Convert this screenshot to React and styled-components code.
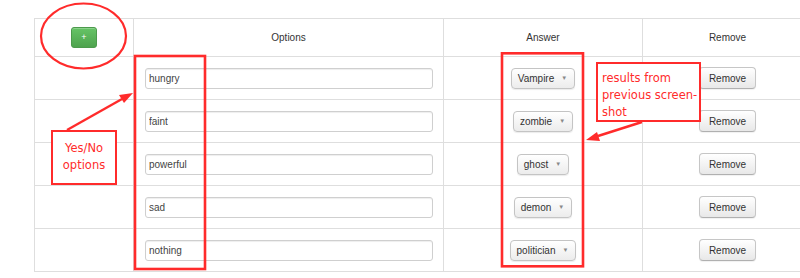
import React from "react";
import styled, { createGlobalStyle } from "styled-components";

const rows = [
  { option: "hungry", answer: "Vampire" },
  { option: "faint", answer: "zombie" },
  { option: "powerful", answer: "ghost" },
  { option: "sad", answer: "demon" },
  { option: "nothing", answer: "politician" },
];

const RED = "#ff2b2b";

function App() {
  return (
    <>
      <GlobalStyle />
      <Page>
        <Table>
          <colgroup>
            <col style={{ width: 99 }} />
            <col style={{ width: 310 }} />
            <col style={{ width: 199 }} />
            <col style={{ width: 170 }} />
          </colgroup>
          <thead>
            <tr>
              <HeadCell>
                <AddButton>+</AddButton>
              </HeadCell>
              <HeadCell>Options</HeadCell>
              <HeadCell>Answer</HeadCell>
              <HeadCell>Remove</HeadCell>
            </tr>
          </thead>
          <tbody>
            {rows.map((r) => (
              <tr key={r.option}>
                <Cell />
                <Cell $align="left">
                  <TextInput defaultValue={r.option} />
                </Cell>
                <Cell>
                  <SelectBox>
                    {r.answer}
                    <Caret>▼</Caret>
                  </SelectBox>
                </Cell>
                <Cell>
                  <RemoveButton>Remove</RemoveButton>
                </Cell>
              </tr>
            ))}
          </tbody>
        </Table>

        <Marks viewBox="0 0 800 278" width="800" height="278">
          <ellipse cx="83.5" cy="36" rx="42.5" ry="32.5" fill="none" stroke={RED} strokeWidth="2.2" />
          <rect x="135" y="56" width="70" height="213" fill="none" stroke={RED} strokeWidth="2.6" />
          <rect x="502" y="53.3" width="81" height="213" fill="none" stroke={RED} strokeWidth="2.6" />
          <line x1="67" y1="130" x2="122" y2="99" stroke={RED} strokeWidth="2.4" />
          <polygon points="133,93 124,103 119,95" fill={RED} />
          <line x1="642" y1="122" x2="598" y2="136" stroke={RED} strokeWidth="2.4" />
          <polygon points="586,140 600,141 597,132" fill={RED} />
        </Marks>

        <NoteBox $left={51} $top={130} $width={66} $height={55} $center>
          Yes/No
          <br />
          options
        </NoteBox>
        <NoteBox $left={596} $top={62} $width={105} $height={60}>
          results from
          <br />
          previous screen-
          <br />
          shot
        </NoteBox>
      </Page>
    </>
  );
}

const GlobalStyle = createGlobalStyle`
  html, body {
    margin: 0;
    padding: 0;
    background: #fff;
    overflow: hidden;
  }
  body {
    font-family: "Liberation Sans", Arial, sans-serif;
  }
`;

const Page = styled.div`
  position: relative;
  width: 800px;
  height: 278px;
  padding: 18px 0 0 34px;
  box-sizing: border-box;
  overflow: hidden;
`;

const Table = styled.table`
  width: 778px;
  border-collapse: collapse;
  table-layout: fixed;
  font-size: 10px;
  color: #333;
`;

const HeadCell = styled.th`
  height: 37px;
  padding: 0;
  border: 1px solid #dedede;
  font-weight: normal;
  text-align: center;
  vertical-align: middle;
`;

const Cell = styled.td`
  height: 42px;
  padding: ${(p) => (p.$align === "left" ? "0 0 0 11px" : "0")};
  border: 1px solid #dedede;
  text-align: ${(p) => p.$align || "center"};
  vertical-align: middle;
`;

const AddButton = styled.button`
  width: 26px;
  height: 21px;
  padding: 0;
  border: 1px solid #4c9a4c;
  border-radius: 3px;
  background: linear-gradient(#66c466, #4ea34e);
  color: #fff;
  font-family: "Liberation Sans", Arial, sans-serif;
  font-size: 9px;
  line-height: 19px;
  box-shadow: inset 0 1px 0 rgba(255, 255, 255, 0.25);
`;

const TextInput = styled.input`
  display: block;
  width: 288px;
  height: 21px;
  box-sizing: border-box;
  padding: 0 3px;
  border: 1px solid #cfcfcf;
  border-radius: 3px;
  box-shadow: inset 0 1px 1px rgba(0, 0, 0, 0.07);
  font-family: "Liberation Sans", Arial, sans-serif;
  font-size: 10px;
  color: #444;
  outline: none;
`;

const SelectBox = styled.div`
  display: inline-flex;
  align-items: center;
  gap: 7px;
  height: 21px;
  box-sizing: border-box;
  padding: 0 7px 0 6px;
  border: 1px solid #c4c4c4;
  border-radius: 4px;
  background: linear-gradient(#ffffff, #ececec);
  box-shadow: 0 1px 1px rgba(0, 0, 0, 0.08);
  font-size: 10px;
  color: #333;
`;

const Caret = styled.span`
  font-size: 6px;
  color: #888;
`;

const RemoveButton = styled.button`
  width: 57px;
  height: 22px;
  padding: 0;
  border: 1px solid #c6c6c6;
  border-bottom-color: #b0b0b0;
  border-radius: 4px;
  background: linear-gradient(#ffffff, #e8e8e8);
  box-shadow: 0 1px 1px rgba(0, 0, 0, 0.06);
  font-family: "Liberation Sans", Arial, sans-serif;
  font-size: 10px;
  color: #333;
`;

const Marks = styled.svg`
  position: absolute;
  left: 0;
  top: 0;
  pointer-events: none;
`;

const NoteBox = styled.div`
  position: absolute;
  left: ${(p) => p.$left}px;
  top: ${(p) => p.$top}px;
  width: ${(p) => p.$width}px;
  height: ${(p) => p.$height}px;
  box-sizing: border-box;
  border: 2.5px solid ${RED};
  background: #fff;
  padding: ${(p) => (p.$center ? "8px 0 0 0" : "6px 0 0 4px")};
  text-align: ${(p) => (p.$center ? "center" : "left")};
  font-family: "DejaVu Sans", Verdana, sans-serif;
  font-size: 11.5px;
  line-height: 17px;
  color: ${RED};
`;

export default App;
